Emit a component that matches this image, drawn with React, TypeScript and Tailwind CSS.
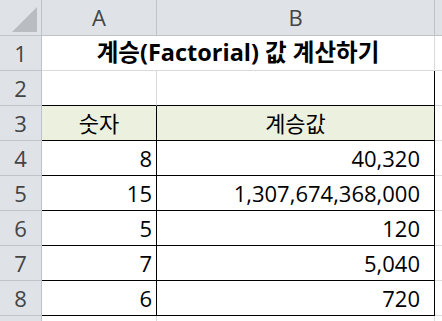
import React from 'react';

const font = { fontFamily: '"Open Sans", "Noto Sans CJK KR", sans-serif' };

// 한 행의 데이터: 숫자와 계승값
const rows = [
  { n: '8', f: '40,320' },
  { n: '15', f: '1,307,674,368,000' },
  { n: '5', f: '120' },
  { n: '7', f: '5,040' },
  { n: '6', f: '720' },
];

const hdr = 'bg-[#dfe2e6] border-r border-b border-[#bfc3c8] text-[#444] flex items-center justify-center';
const grid = 'bg-white border-r border-b border-[#dadada]';

const RowHead = ({ n }: { n: number | string }) => <div className={`${hdr} h-[35px]`}>{n}</div>;

export default function App() {
  return (
    <div className="w-[442px] h-[321px] overflow-hidden bg-white text-[22px] text-black" style={font}>
      <div className="grid grid-cols-[42px_115px_278px_7px]">
        {/* 열 머리글 */}
        <div className={`${hdr} h-[36px] relative`}>
          <svg className="absolute right-[4px] bottom-[3px]" width="25" height="25" viewBox="0 0 25 25">
            <polygon points="25,0 25,25 0,25" fill="#b9bdc2" />
          </svg>
        </div>
        <div className={`${hdr} h-[36px]`}>A</div>
        <div className={`${hdr} h-[36px]`}>B</div>
        <div className={`${hdr} h-[36px] border-r-0`}></div>

        {/* 1행: 제목 */}
        <RowHead n={1} />
        <div className={`${grid} col-span-2 flex items-center justify-center font-bold text-[23.5px] h-[35px]`}>
          계승(Factorial) 값 계산하기
        </div>
        <div className={`${grid} border-r-0`}></div>

        {/* 2행 */}
        <RowHead n={2} />
        <div className="bg-white border-r border-r-[#dadada] border-b border-b-black"></div>
        <div className="bg-white border-r border-r-black border-b border-b-black"></div>
        <div className={`${grid} border-r-0`}></div>

        {/* 3행: 머리글 */}
        <RowHead n={3} />
        <div className="bg-[#ebf1de] border-r border-b border-black flex items-center justify-center h-[35px]">숫자</div>
        <div className="bg-[#ebf1de] border-r border-b border-black flex items-center justify-center">계승값</div>
        <div className={`${grid} border-r-0`}></div>

        {rows.map((r, i) => (
          <React.Fragment key={i}>
            <RowHead n={i + 4} />
            <div className="bg-white border-r border-b border-black flex items-center justify-end pr-[4px] h-[35px]">{r.n}</div>
            <div className="bg-white border-r border-b border-black flex items-center justify-end pr-[14px]">{r.f}</div>
            <div className={`${grid} border-r-0`}></div>
          </React.Fragment>
        ))}

        {/* 아래 여백 행 */}
        <div className={`${hdr} h-[6px]`}></div>
        <div className={`${grid} border-b-0`}></div>
        <div className={`${grid} border-b-0`}></div>
        <div className="bg-white"></div>
      </div>
    </div>
  );
}
